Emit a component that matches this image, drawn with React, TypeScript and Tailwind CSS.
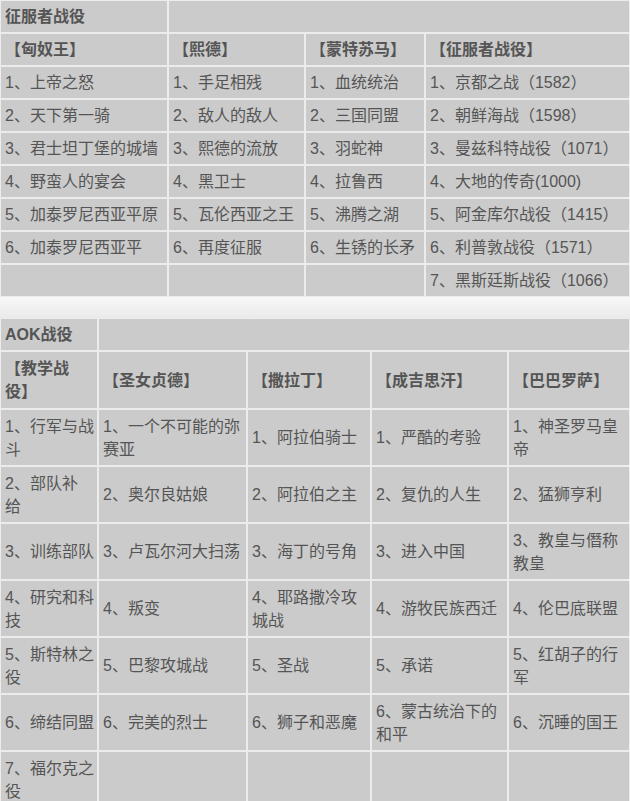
import React from "react";

const font = {
  fontFamily: '"Liberation Sans", "Noto Sans CJK SC", sans-serif',
};

const conquerors: string[][] = [
  ["1、上帝之怒", "1、手足相残", "1、血统统治", "1、京都之战（1582）"],
  ["2、天下第一骑", "2、敌人的敌人", "2、三国同盟", "2、朝鲜海战（1598）"],
  ["3、君士坦丁堡的城墙", "3、熙德的流放", "3、羽蛇神", "3、曼兹科特战役（1071）"],
  ["4、野蛮人的宴会", "4、黑卫士", "4、拉鲁西", "4、大地的传奇(1000)"],
  ["5、加泰罗尼西亚平原", "5、瓦伦西亚之王", "5、沸腾之湖", "5、阿金库尔战役（1415）"],
  ["6、加泰罗尼西亚平", "6、再度征服", "6、生锈的长矛", "6、利普敦战役（1571）"],
  ["", "", "", "7、黑斯廷斯战役（1066）"],
];

// line breaks copied from the original page
const aok: string[][] = [
  ["1、行军与战\n斗", "1、一个不可能的弥\n赛亚", "1、阿拉伯骑士", "1、严酷的考验", "1、神圣罗马皇\n帝"],
  ["2、部队补\n给", "2、奥尔良姑娘", "2、阿拉伯之主", "2、复仇的人生", "2、猛狮亨利"],
  ["3、训练部队", "3、卢瓦尔河大扫荡", "3、海丁的号角", "3、进入中国", "3、教皇与僭称\n教皇"],
  ["4、研究和科\n技", "4、叛变", "4、耶路撒冷攻\n城战", "4、游牧民族西迁", "4、伦巴底联盟"],
  ["5、斯特林之\n役", "5、巴黎攻城战", "5、圣战", "5、承诺", "5、红胡子的行\n军"],
  ["6、缔结同盟", "6、完美的烈士", "6、狮子和恶魔", "6、蒙古统治下的\n和平", "6、沉睡的国王"],
  ["7、福尔克之\n役", "", "", "", ""],
];

const cell =
  "border border-[#ececec] bg-[#cbcbcb] pl-[4px] pr-[2px] align-middle text-[16px] leading-[23px] text-[#555555] whitespace-pre-line";

const head = "font-bold text-[#4a4a4a]";

const App: React.FC = () => {
  return (
    <div className="w-[630px] bg-[#f2f2f2]" style={font}>
      <table className="w-[630px] table-fixed border-separate border-spacing-0">
        <colgroup>
          <col className="w-[168px]" />
          <col className="w-[137px]" />
          <col className="w-[120px]" />
          <col className="w-[205px]" />
        </colgroup>
        <tbody>
          <tr>
            <td className={`${cell} py-[4px] ${head}`}>征服者战役</td>
            <td className={`${cell} py-[4px]`} colSpan={3}></td>
          </tr>
          <tr>
            {["【匈奴王】", "【熙德】", "【蒙特苏马】", "【征服者战役】"].map((h) => (
              <td key={h} className={`${cell} py-[4px] ${head}`}>
                {h}
              </td>
            ))}
          </tr>
          {conquerors.map((row, i) => (
            <tr key={i}>
              {row.map((c, j) => (
                <td key={j} className={`${cell} h-[33px] py-[4px]`}>
                  {c}
                </td>
              ))}
            </tr>
          ))}
        </tbody>
      </table>

      <div className="h-[21px] bg-gradient-to-b from-[#f7f7f7] to-[#eaeaea]" />

      <table className="w-[630px] table-fixed border-separate border-spacing-0">
        <colgroup>
          <col className="w-[98px]" />
          <col className="w-[149px]" />
          <col className="w-[124px]" />
          <col className="w-[137px]" />
          <col className="w-[122px]" />
        </colgroup>
        <tbody>
          <tr>
            <td className={`${cell} h-[32px] py-[4px] ${head}`}>AOK战役</td>
            <td className={`${cell} py-[4px]`} colSpan={4}></td>
          </tr>
          <tr>
            {["【教学战\n役】", "【圣女贞德】", "【撒拉丁】", "【成吉思汗】", "【巴巴罗萨】"].map((h) => (
              <td key={h} className={`${cell} h-[58px] py-[5px] ${head}`}>
                {h}
              </td>
            ))}
          </tr>
          {aok.map((row, i) => (
            <tr key={i}>
              {row.map((c, j) => (
                <td key={j} className={`${cell} h-[57px] py-[4px]`}>
                  {c}
                </td>
              ))}
            </tr>
          ))}
        </tbody>
      </table>
    </div>
  );
};

export default App;
